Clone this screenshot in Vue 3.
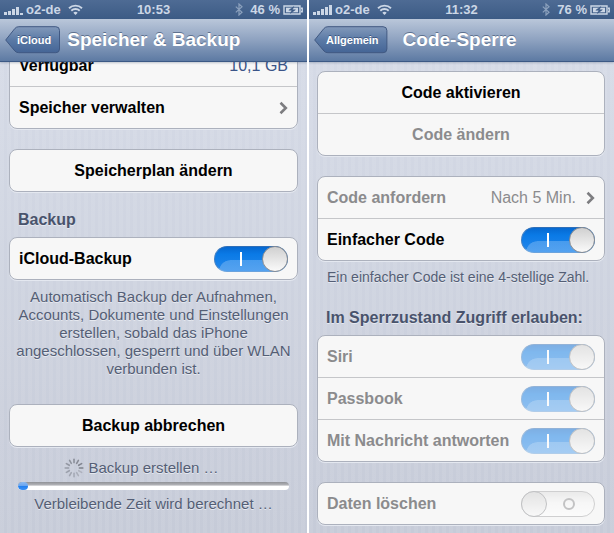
<script setup>
import { reactive } from 'vue'

const s = reactive({ backup: true, simple: true, siri: true, passbook: true, reply: true, erase: false })
const bars = [3, 4, 6, 8, 10]
const spokes = Array.from({ length: 12 }, (_, i) => ({ angle: i * 30, alpha: 0.22 + ((i + 8) % 12) * 0.035 }))
const phones = [
  { id: 'a', time: '10:53', charge: '46 %', back: 'iCloud', title: 'Speicher & Backup', signal: 4 },
  { id: 'b', time: '11:32', charge: '76 %', back: 'Allgemein', title: 'Code-Sperre', signal: 5 }
]
</script>

<template>
  <div class="screens">
    <section v-for="p in phones" :key="p.id" class="phone">
      <div class="status">
        <div class="carrier">
          <svg class="signal" width="19" height="10" viewBox="0 0 19 10" aria-hidden="true">
            <rect v-for="(h, i) in bars" :key="i" :x="i * 4" :y="i < p.signal ? 10 - h : 8" width="3" :height="i < p.signal ? h : 2" />
          </svg>
          <span>o2-de</span>
          <svg class="wifi" width="15" height="11" viewBox="0 0 15 11" aria-hidden="true">
            <path d="M1 4.2a9.4 9.4 0 0 1 13 0M3.3 6.7a6 6 0 0 1 8.4 0" fill="none" stroke="currentColor" stroke-width="1.9" />
            <path d="M5.3 8.7a3.2 3.2 0 0 1 4.4 0L7.5 11z" fill="currentColor" />
          </svg>
        </div>
        <span class="time">{{ p.time }}</span>
        <div class="power">
          <svg class="bluetooth" width="8" height="13" viewBox="0 0 8 13" aria-hidden="true">
            <path d="M.8 3.6 7 9.2 4 12V1l3 2.8L.8 9.4" fill="none" stroke="currentColor" stroke-width="1.2" />
          </svg>
          <span>{{ p.charge }}</span>
          <svg width="20" height="10" viewBox="0 0 20 10" aria-hidden="true">
            <path d="M1 1h16v8H1zM18 3.2h1.2v3.6H18" fill="none" stroke="currentColor" stroke-width="1.4" />
            <path d="M3 2.7h12v4.6H3z" fill="currentColor" />
            <path d="M10.8 1.6 5.8 5.2h3L7.4 8.4l5-3.6h-3z" fill="#3c5b86" stroke="#3c5b86" stroke-width=".5" />
          </svg>
        </div>
      </div>

      <header class="nav">
        <button type="button" class="back">
          <svg class="back-shape" viewBox="0 0 56 28" preserveAspectRatio="none" aria-hidden="true" v-if="p.id === 'a'">
            <path class="edge" d="M.7 14 10 2.5Q11.5.7 14 .7H51.5Q55.3.7 55.3 4.5V23Q55.3 26.7 51.5 26.7H14Q11.5 26.7 10 25z" fill="url(#backFill)" />
          </svg>
          <svg class="back-shape" viewBox="0 0 74 28" preserveAspectRatio="none" aria-hidden="true" v-else>
            <path class="edge" d="M.7 14 10 2.5Q11.5.7 14 .7H69.5Q73.3.7 73.3 4.5V23Q73.3 26.7 69.5 26.7H14Q11.5 26.7 10 25z" fill="url(#backFill)" />
          </svg>
          <span class="back-text">{{ p.back }}</span>
        </button>
        <h1>{{ p.title }}</h1>
      </header>

      <main v-if="p.id === 'a'" class="content storage">
        <div class="card scrolled">
          <div class="row"><strong>Verfügbar</strong><span class="value">10,1 GB</span></div>
          <a href="#manage" class="row">
            <strong>Speicher verwalten</strong>
            <svg class="chevron" width="9" height="14" viewBox="0 0 9 14" aria-hidden="true"><path d="M1.5 1.8 6.8 7l-5.3 5.2" /></svg>
          </a>
        </div>
        <div class="card"><button type="button" class="row action">Speicherplan ändern</button></div>
        <h2>Backup</h2>
        <div class="card">
          <label class="row"><strong>iCloud-Backup</strong><input v-model="s.backup" type="checkbox" class="toggle"></label>
        </div>
        <p class="note centered">Automatisch Backup der Aufnahmen, Accounts, Dokumente und Einstellungen erstellen, sobald das iPhone angeschlossen, gesperrt und über WLAN verbunden ist.</p>
        <div class="card"><button type="button" class="row action">Backup abbrechen</button></div>
        <div class="working">
          <svg width="20" height="20" viewBox="-10 -10 20 20" aria-hidden="true">
            <rect v-for="k in spokes" :key="k.angle" x="-.8" y="-9.6" width="1.6" height="5" rx=".8" fill="#4c4f58" :fill-opacity="k.alpha" :transform="`rotate(${k.angle})`" />
          </svg>
          <label for="progress">Backup erstellen …</label>
        </div>
        <progress id="progress" value="3.6" max="100"></progress>
        <p class="remaining">Verbleibende Zeit wird berechnet …</p>
      </main>

      <main v-else class="content lock">
        <div class="card">
          <button type="button" class="row action">Code aktivieren</button>
          <button type="button" class="row action" disabled>Code ändern</button>
        </div>
        <div class="card">
          <a href="#require" class="row dim">
            <strong>Code anfordern</strong><span class="value">Nach 5 Min.</span>
            <svg class="chevron" width="9" height="14" viewBox="0 0 9 14" aria-hidden="true"><path d="M1.5 1.8 6.8 7l-5.3 5.2" /></svg>
          </a>
          <label class="row"><strong>Einfacher Code</strong><input v-model="s.simple" type="checkbox" class="toggle"></label>
        </div>
        <p class="note">Ein einfacher Code ist eine 4-stellige Zahl.</p>
        <h2>Im Sperrzustand Zugriff erlauben:</h2>
        <div class="card">
          <label class="row dim"><strong>Siri</strong><input v-model="s.siri" type="checkbox" class="toggle" disabled></label>
          <label class="row dim"><strong>Passbook</strong><input v-model="s.passbook" type="checkbox" class="toggle" disabled></label>
          <label class="row dim"><strong>Mit Nachricht antworten</strong><input v-model="s.reply" type="checkbox" class="toggle" disabled></label>
        </div>
        <div class="card">
          <label class="row dim"><strong>Daten löschen</strong><input v-model="s.erase" type="checkbox" class="toggle" disabled></label>
        </div>
      </main>
    </section>
    <svg class="defs" width="0" height="0" aria-hidden="true">
      <linearGradient id="backFill" x1="0" y1="0" x2="0" y2="1">
        <stop offset="0" stop-color="#8299ba" />
        <stop offset=".5" stop-color="#5b7aa6" />
        <stop offset="1" stop-color="#456596" />
      </linearGradient>
    </svg>
  </div>
</template>

<style>
body {
  margin: 0;
  background: #fff;
}
</style>

<style scoped>
.screens {
  display: grid;
  grid-template-columns: 307fr 305fr;
  gap: 2px;
  min-height: 100vh;
  font-family: "Liberation Sans", Arial, sans-serif;
}
.screens * { box-sizing: border-box; }
.defs { position: absolute; }
.phone {
  display: flex;
  flex-direction: column;
  min-width: 0;
  overflow: hidden;
  background:
    repeating-linear-gradient(90deg, rgb(255 255 255 / 7%) 0 4px, transparent 4px 7px),
    linear-gradient(#d7dce8, #c6cbd8);
}
.status {
  display: grid;
  grid-template-columns: 1fr auto 1fr;
  align-items: center;
  height: 19px;
  padding: 0 4px;
  background: linear-gradient(#4e6b94, #3c5b85);
  color: #ccd7e6;
  font-size: 13px;
  font-weight: bold;
}
.carrier, .power {
  display: flex;
  align-items: center;
  gap: 3px;
  white-space: nowrap;
}
.power { justify-content: flex-end; }
.signal { fill: currentColor; }
.wifi { margin-left: 4px; }
.bluetooth { margin-right: 4px; color: #8ca1bd; }
.nav {
  position: relative;
  z-index: 1;
  display: flex;
  align-items: center;
  gap: 7px;
  height: 43px;
  padding: 0 5px;
  border-bottom: 1px solid #3c5985;
  background: linear-gradient(#bac7da, #8ea2c0 50%, #5d7aa3);
  box-shadow: 0 1px 2px rgb(60 80 110 / 30%);
}
.back {
  position: relative;
  height: 28px;
  padding: 0 9px 0 12px;
  border: 0;
  background: none;
  color: #fff;
  font: bold 11px "Liberation Sans", Arial, sans-serif;
  text-shadow: 0 -1px 0 #3c5680;
}
.back-shape {
  position: absolute;
  inset: 0;
  width: 100%;
  height: 100%;
}
.edge { stroke: #405881; stroke-width: 1; }
.back-text { position: relative; }
h1 {
  margin: 0;
  color: #fff;
  font-size: 19px;
  line-height: 24px;
  text-shadow: 0 -1px 0 #5d718f;
  white-space: nowrap;
}
.phone:nth-of-type(2) .nav { gap: 15px; }
.content {
  display: flex;
  flex-direction: column;
  padding: 0 9px;
}
.lock { padding: 9px 9px 7px 8px; }
.card {
  overflow: hidden;
  border: 1px solid #acb1bd;
  border-radius: 8px;
  background: #f7f7f7;
  box-shadow: 0 1px 0 #e4e8f0;
}
.card + .card { margin-top: 20px; }
.scrolled { margin-top: -18px; }
.row {
  display: flex;
  align-items: center;
  width: 100%;
  height: 41px;
  padding: 0 9px;
  color: #000;
  font-size: 16px;
  text-decoration: none;
}
.row + .row {
  height: 42px;
  border-top: 1px solid #c5c6c9;
}
.row strong { margin-right: auto; white-space: nowrap; }
.dim { color: #8b8b8d; }
.value { color: #3b5488; white-space: nowrap; }
.dim .value { color: #8b8b8d; }
.chevron {
  margin-left: 10px;
  fill: none;
  stroke: #7d7d80;
  stroke-width: 2.6;
}
.action {
  justify-content: center;
  border: 0;
  background: none;
  font-family: inherit;
  font-weight: bold;
}
.action:disabled { color: #8b8b8d; }
h2 {
  margin: 17px 9px 6px;
  color: #49536c;
  font-size: 16px;
  line-height: 22px;
  text-shadow: 0 1px 0 #e6e9f0;
}
.note, .remaining, .working {
  color: #545e75;
  font-size: 15px;
  line-height: 18px;
  text-shadow: 0 1px 0 #e6e9f0;
}
.note { margin: 7px 10px 4px; font-size: 14px; }
.centered { margin: 8px 4px 26px; font-size: 15px; text-align: center; }
.working {
  display: flex;
  align-items: center;
  justify-content: center;
  gap: 4px;
  margin-top: 11px;
  padding-right: 24px;
}
.remaining { margin: 5px 0 0; text-align: center; }
progress {
  width: auto;
  height: 8px;
  margin: 4px 9px 0;
  appearance: none;
  border: 0;
}
progress::-webkit-progress-bar {
  overflow: hidden;
  border-radius: 4px;
  background: linear-gradient(#8f9196, #b5b6ba 40%, #fff 50%, #fff);
}
progress::-webkit-progress-value {
  border-radius: 4px;
  background: linear-gradient(#8dbaf0, #6ba6ef 45%, #1f7eee 50%, #3f93f5);
}
.toggle {
  position: relative;
  flex: none;
  width: 74px;
  height: 26px;
  margin: 0;
  appearance: none;
  border: 1px solid #a8a8aa;
  border-radius: 13px;
  background: linear-gradient(#dedede, #f7f7f7 45%, #fff);
}
.toggle::before {
  content: "";
  position: absolute;
  top: -1px;
  left: -1px;
  box-sizing: border-box;
  width: 26px;
  height: 26px;
  border: 1px solid #8b8d91;
  border-radius: 50%;
  background: linear-gradient(#d0d0d0, #fafafa);
}
.toggle::after {
  content: "";
  position: absolute;
  top: 6px;
  left: 41px;
  box-sizing: border-box;
  width: 12px;
  height: 12px;
  border: 2px solid #909092;
  border-radius: 50%;
}
.toggle:checked {
  border-color: #2f6fb8 #3f7fc4 #6ba3dd;
  background:
    radial-gradient(circle 11px at 100% 100%, rgb(255 255 255 / 22%) 94%, transparent) 4px 13px / 11px 11px no-repeat,
    linear-gradient(rgb(255 255 255 / 22%), rgb(255 255 255 / 22%)) 15px 13px / 50px 11px no-repeat,
    linear-gradient(#0668d0, #0a7ae6 30%, #2488ec);
}
.toggle:checked::before { left: 47px; }
.toggle:checked::after {
  top: 5px;
  left: 25px;
  width: 2px;
  height: 14px;
  border: 0;
  border-radius: 0;
  background: #fff;
}
.toggle:disabled { opacity: .5; }
</style>
